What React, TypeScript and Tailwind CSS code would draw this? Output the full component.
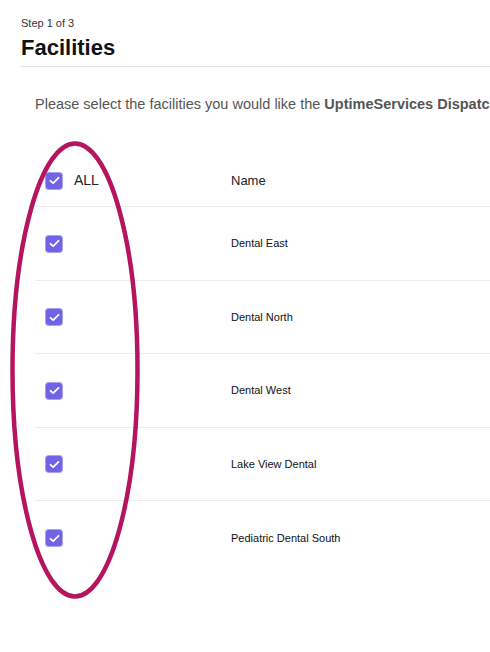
const facilities = ["Dental East", "Dental North", "Dental West", "Lake View Dental", "Pediatric Dental South"];

function CheckBox() {
  return (
    <span className="flex h-4 w-4 items-center justify-center rounded-[3px] bg-[#7063e8] ring-1 ring-[#a79ff0]">
      <svg width="11" height="9" viewBox="0 0 11 9" fill="none">
        <path d="M1.5 4.8 L4.2 7.2 L9.5 1.8" stroke="white" strokeWidth="1.8" strokeLinecap="round" strokeLinejoin="round" />
      </svg>
    </span>
  );
}

export default function App() {
  return (
    <div className="relative h-[652px] w-[490px] overflow-hidden bg-white font-['Liberation_Sans',Arial,sans-serif] text-[#1a1a1a]">
      <div className="pl-[21px] pt-[15px]">
        <p className="text-[11px] text-[#333]">Step 1 of 3</p>
        <h1 className="mt-[2px] text-[22px] font-bold leading-[28px] text-[#111]">Facilities</h1>
        <div className="mt-[4px] h-px bg-[#e0e0e0]"></div>
      </div>

      <p className="mt-[27px] overflow-hidden whitespace-nowrap pl-[35px] text-[14.5px] text-[#555]">
        Please select the facilities you would like the <span className="font-bold">UptimeServices Dispatcher</span> to access
      </p>

      <div className="ml-[35px] mt-[40px]">
        <div className="flex h-[52px] items-center border-b border-[#ececec]">
          <div className="flex w-[196px] items-center pl-[11px]">
            <CheckBox />
            <span className="ml-[12px] text-[14px] text-[#222]">ALL</span>
          </div>
          <span className="text-[13px] text-[#222]">Name</span>
        </div>
        {facilities.map((f, i) => (
          <div key={f} className={`flex h-[73.5px] items-center ${i < facilities.length - 1 ? "border-b border-[#ececec]" : ""}`}>
            <div className="flex w-[196px] items-center pl-[11px]">
              <CheckBox />
            </div>
            <span className="text-[11px] text-[#111]">{f}</span>
          </div>
        ))}
      </div>

      <svg className="pointer-events-none absolute left-0 top-0" width="490" height="652">
        <ellipse cx="75" cy="370" rx="62.5" ry="226.5" fill="none" stroke="#b5145f" strokeWidth="4.5" />
      </svg>
    </div>
  );
}
